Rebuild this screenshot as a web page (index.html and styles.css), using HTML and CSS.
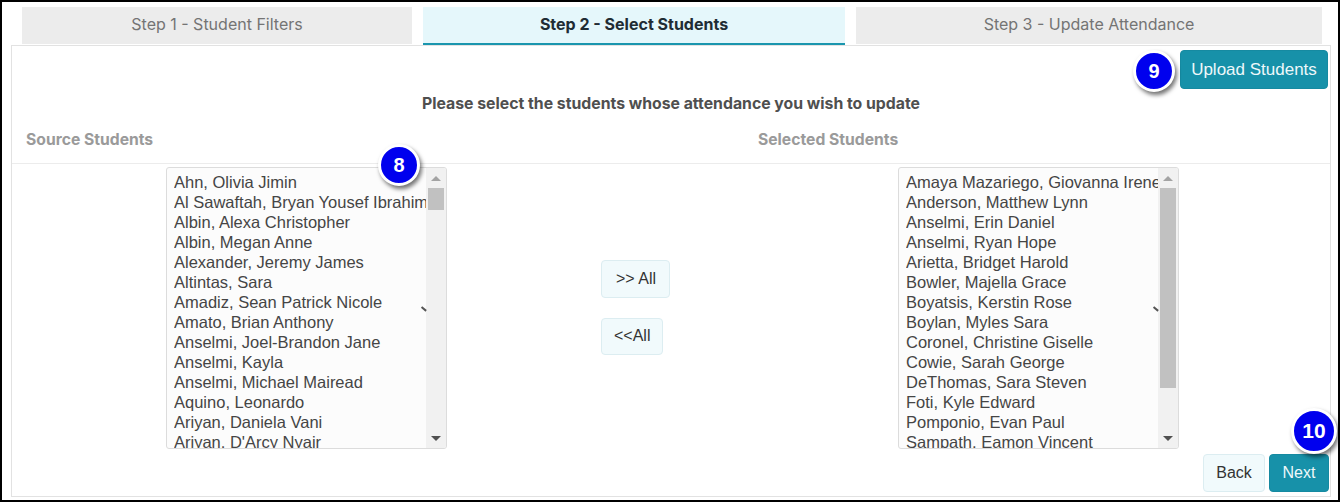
FILE: index.html
```html
<!DOCTYPE html>
<html lang="en">
<head>
<meta charset="utf-8">
<title>Select Students</title>
<link rel="stylesheet" href="styles.css">
</head>
<body>
<div class="frame">
  <div class="tabs">
    <div class="tab">Step 1 - Student Filters</div>
    <div class="tab tab-active">Step 2 - Select Students</div>
    <div class="tab">Step 3 - Update Attendance</div>
  </div>
  <div class="card">
    <div class="card-top">
      <button class="btn btn-primary btn-upload">Upload Students</button>
    </div>
    <div class="prompt">Please select the students whose attendance you wish to update</div>
    <div class="labels">
      <div class="label">Source Students</div>
      <div class="label">Selected Students</div>
    </div>
    <div class="lists">
      <div class="listbox">
        <div class="items">
          <div class="item">Ahn, Olivia Jimin</div>
          <div class="item">Al Sawaftah, Bryan Yousef Ibrahim</div>
          <div class="item">Albin, Alexa Christopher</div>
          <div class="item">Albin, Megan Anne</div>
          <div class="item">Alexander, Jeremy James</div>
          <div class="item">Altintas, Sara</div>
          <div class="item">Amadiz, Sean Patrick Nicole</div>
          <div class="item">Amato, Brian Anthony</div>
          <div class="item">Anselmi, Joel-Brandon Jane</div>
          <div class="item">Anselmi, Kayla</div>
          <div class="item">Anselmi, Michael Mairead</div>
          <div class="item">Aquino, Leonardo</div>
          <div class="item">Ariyan, Daniela Vani</div>
          <div class="item">Ariyan, D'Arcy Nyair</div>
        </div>
        <div class="scrollbar">
          <div class="arrow arrow-up"></div>
          <div class="track"><div class="thumb thumb-small"></div></div>
          <div class="arrow arrow-down"></div>
        </div>
        <span class="tick"></span>
      </div>
      <div class="movers">
        <button class="btn btn-light btn-move">&gt;&gt; All</button>
        <button class="btn btn-light btn-move">&lt;&lt;All</button>
      </div>
      <div class="listbox">
        <div class="items">
          <div class="item">Amaya Mazariego, Giovanna Irene</div>
          <div class="item">Anderson, Matthew Lynn</div>
          <div class="item">Anselmi, Erin Daniel</div>
          <div class="item">Anselmi, Ryan Hope</div>
          <div class="item">Arietta, Bridget Harold</div>
          <div class="item">Bowler, Majella Grace</div>
          <div class="item">Boyatsis, Kerstin Rose</div>
          <div class="item">Boylan, Myles Sara</div>
          <div class="item">Coronel, Christine Giselle</div>
          <div class="item">Cowie, Sarah George</div>
          <div class="item">DeThomas, Sara Steven</div>
          <div class="item">Foti, Kyle Edward</div>
          <div class="item">Pomponio, Evan Paul</div>
          <div class="item">Sampath, Eamon Vincent</div>
        </div>
        <div class="scrollbar">
          <div class="arrow arrow-up"></div>
          <div class="track"><div class="thumb thumb-large"></div></div>
          <div class="arrow arrow-down"></div>
        </div>
        <span class="tick"></span>
      </div>
    </div>
    <div class="footer">
      <button class="btn btn-light btn-back">Back</button>
      <button class="btn btn-primary btn-next">Next</button>
    </div>
  </div>
  <span class="badge badge-8">8</span>
  <span class="badge badge-9">9</span>
  <span class="badge badge-10">10</span>
</div>
</body>
</html>
```

FILE: styles.css
```css
* { box-sizing: border-box; }

html, body {
  margin: 0;
  padding: 0;
  background: #ffffff;
}

.frame {
  position: relative;
  width: 1340px;
  height: 502px;
  border: 2px solid #000000;
  padding: 5px 7px 0 9px;
  background: #ffffff;
  font-family: "Liberation Sans", Arial, sans-serif;
}

/* Tabs */
.tabs {
  display: grid;
  grid-template-columns: 390px 422px 466px;
  column-gap: 11px;
  padding-left: 11px;
  height: 38px;
  align-items: start;
}

.tab {
  height: 37px;
  display: flex;
  align-items: center;
  justify-content: center;
  background: #ececec;
  color: #747474;
  font-family: Inter, "Liberation Sans", sans-serif;
  font-size: 16px;
  padding-bottom: 3px;
}

.tab-active {
  height: 38px;
  background: #e5f7fb;
  color: #1f2c34;
  font-weight: 700;
  border-bottom: 2px solid #1a96ae;
  padding-bottom: 2px;
}

/* Card */
.card {
  height: 452px;
  border: 1px solid #e2e2e2;
  background: #ffffff;
  display: flex;
  flex-direction: column;
}

.card-top {
  display: flex;
  justify-content: flex-end;
  padding: 4px 2px 0 0;
}

.btn {
  font-family: "Liberation Sans", Arial, sans-serif;
  font-size: 16px;
  border-radius: 4px;
  padding: 0;
  cursor: pointer;
}

.btn-primary {
  background: #1791a9;
  border: 1px solid #168aa1;
  color: #eef8fa;
}

.btn-light {
  background: #f1fafc;
  border: 1px solid #dcedf1;
  color: #333333;
}

.btn-upload {
  width: 148px;
  height: 39px;
  font-size: 17px;
}

.prompt {
  margin-top: 5px;
  line-height: 20px;
  text-align: center;
  font-family: Inter, "Liberation Sans", sans-serif;
  font-size: 15.8px;
  font-weight: 700;
  color: #4f4f4f;
}

.labels {
  margin-top: 16px;
  display: grid;
  grid-template-columns: 732px 1fr;
  padding: 0 0 13px 14px;
  border-bottom: 1px solid #ececec;
}

.label {
  line-height: 20px;
  font-family: Inter, "Liberation Sans", sans-serif;
  font-size: 15.7px;
  font-weight: 700;
  color: #9a9a9a;
}

/* Lists */
.lists {
  margin-top: 3px;
  display: grid;
  grid-template-columns: 281px 451px 281px;
  padding-left: 154px;
  height: 282px;
}

.listbox {
  position: relative;
  display: flex;
  height: 282px;
  border: 1px solid #dcdcdc;
  border-radius: 3px;
  background: #fcfcfc;
  overflow: hidden;
}

.items {
  flex: 1;
  min-width: 0;
  overflow: hidden;
  padding: 4px 0 0 7px;
}

.item {
  white-space: nowrap;
  overflow: hidden;
  font-size: 16.5px;
  line-height: 20px;
  color: #454545;
}

.scrollbar {
  width: 20px;
  display: flex;
  flex-direction: column;
  background: #f1f1f1;
}

.arrow {
  height: 20px;
  display: flex;
  align-items: center;
  justify-content: center;
}

.arrow::before {
  content: "";
  width: 0;
  height: 0;
  border-left: 5px solid transparent;
  border-right: 5px solid transparent;
}

.arrow-up::before {
  border-bottom: 5px solid #a3a3a3;
}

.arrow-down::before {
  border-top: 5px solid #505050;
}

.track {
  flex: 1;
  padding: 0 2px;
}

.thumb {
  background: #c1c1c1;
}

.thumb-small {
  height: 22px;
}

.thumb-large {
  height: 200px;
}

.tick {
  position: absolute;
  left: 254px;
  top: 140px;
  width: 6px;
  height: 1.5px;
  background: #555555;
  transform: rotate(40deg);
}

.movers {
  display: flex;
  flex-direction: column;
  justify-content: center;
  align-items: flex-start;
  gap: 20px;
  padding-left: 154px;
  padding-bottom: 2px;
}

.btn-move {
  height: 38px;
  font-size: 16px;
  padding: 0 13px 0 14px;
}

.btn-move + .btn-move {
  height: 37px;
  padding: 0 12px;
}

/* Footer */
.footer {
  margin-top: 5px;
  display: flex;
  justify-content: flex-end;
  gap: 4px;
  padding-right: 1px;
}

.btn-back,
.btn-next {
  height: 38px;
}

.btn-back { width: 62px; }
.btn-next { width: 60px; }

/* Callout badges */
.badge {
  position: absolute;
  display: flex;
  align-items: center;
  justify-content: center;
  border-radius: 50%;
  background: #0000ee;
  color: #ffffff;
  border: 3px solid #ffffff;
  box-shadow: 2px 3px 4px rgba(0, 0, 0, 0.55);
  font-family: "Liberation Sans", Arial, sans-serif;
  font-weight: 700;
  font-size: 20px;
}

.badge-8 {
  left: 376px;
  top: 142px;
  width: 42px;
  height: 42px;
}

.badge-9 {
  left: 1131px;
  top: 48px;
  width: 42px;
  height: 42px;
}

.badge-10 {
  left: 1289px;
  top: 406px;
  width: 46px;
  height: 46px;
  font-size: 21px;
}
```
